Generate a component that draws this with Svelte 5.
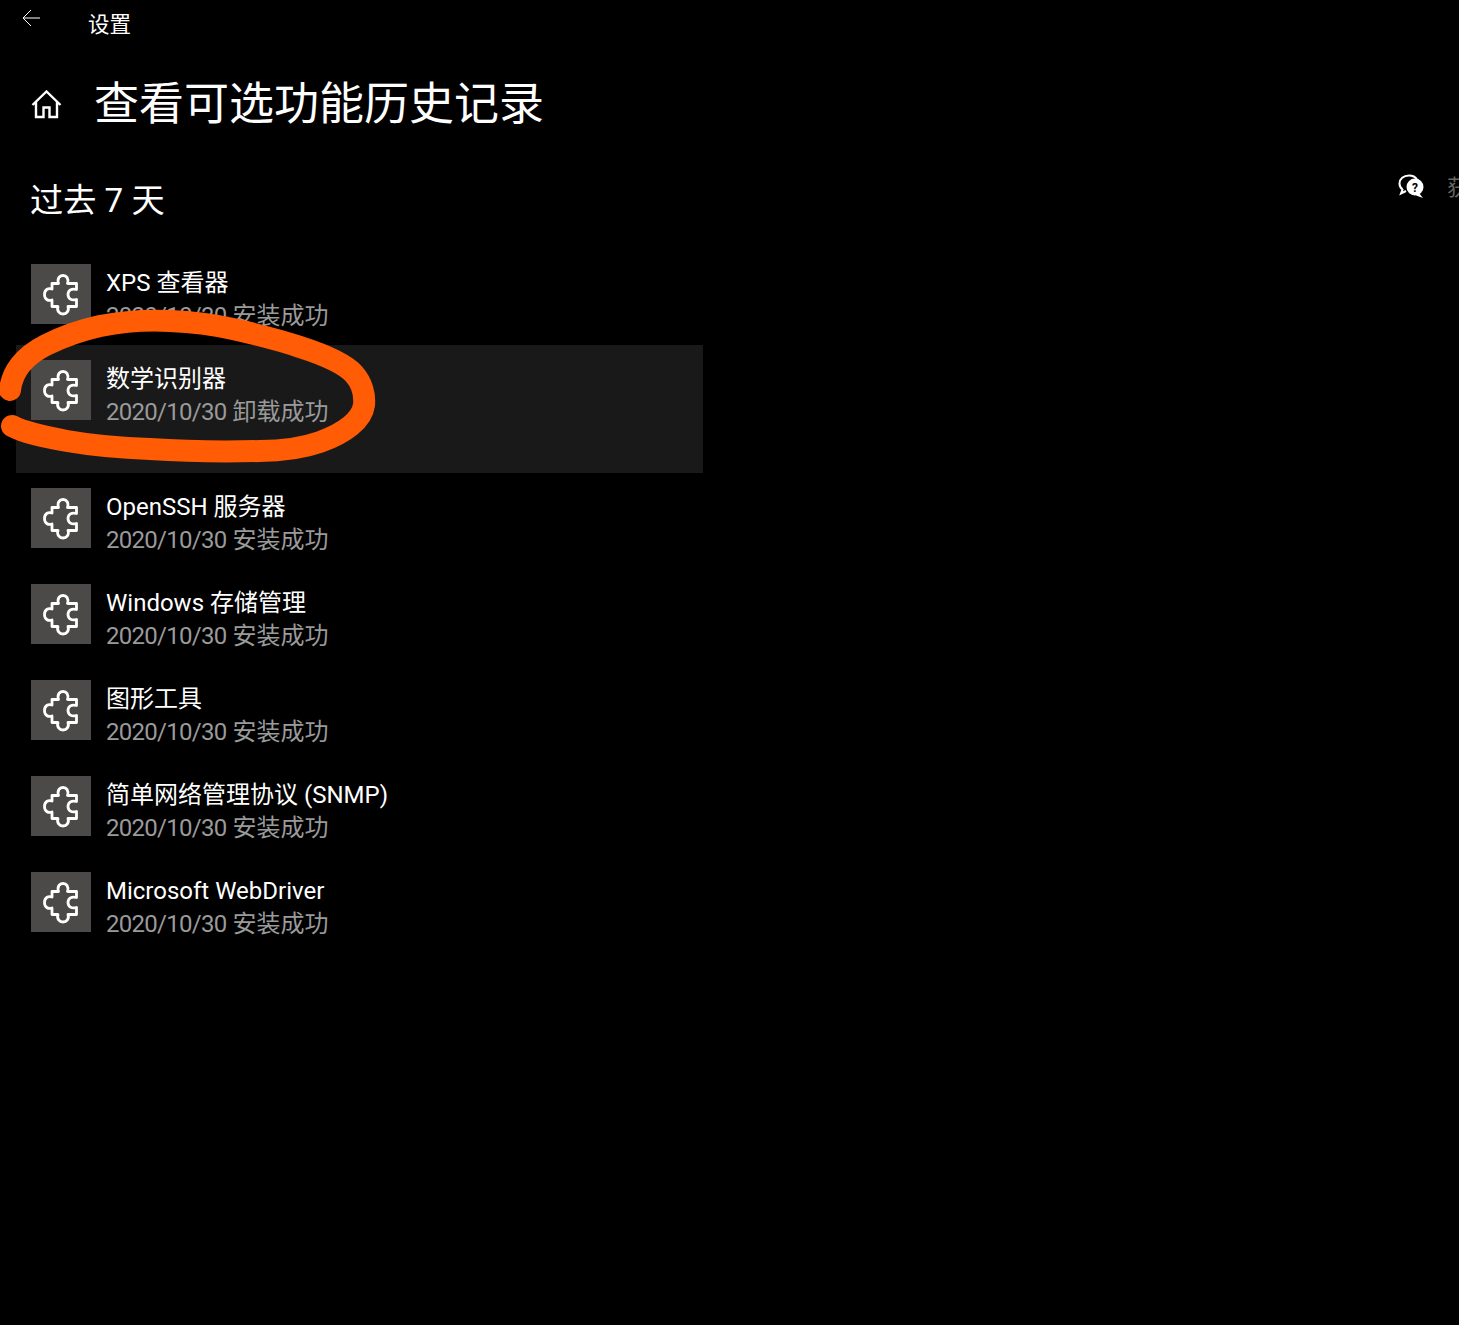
<script>
  const rows = [
    { name: 'XPS 查看器', result: '安装成功' },
    { name: '数学识别器', result: '卸载成功', selected: true },
    { name: 'OpenSSH 服务器', result: '安装成功' },
    { name: 'Windows 存储管理', result: '安装成功' },
    { name: '图形工具', result: '安装成功' },
    { name: '简单网络管理协议 (SNMP)', result: '安装成功' },
    { name: 'Microsoft WebDriver', result: '安装成功' }
  ];
</script>

<div class="page">
  <header class="bar">
    <svg class="back" width="20" height="20" viewBox="0 0 20 20" aria-hidden="true">
      <path d="M19 9H2M10 1L2 9l8 8" fill="none" stroke="#fff" stroke-width="1" />
    </svg>
    <span class="bar-title">设置</span>
  </header>

  <div class="title-row">
    <svg class="home" width="31" height="29" viewBox="0 0 31 29" aria-hidden="true">
      <path d="M1.500 15L15.500 1.500l14 13.500M5 12V27h7.500V17.500h6V27H26V12" fill="none" stroke="#fff" stroke-width="2.400" />
    </svg>
    <h1>查看可选功能历史记录</h1>
  </div>

  <div class="content">
    <main class="col">
      <h2>过去 7 天</h2>
      <ul>
        {#each rows as r}
          <li class:selected={r.selected}>
            <div class="tile">
              <svg width="60" height="60" viewBox="0 0 60 60" aria-hidden="true">
                <path d="M21 19.500H27.500C26 14.500 28.500 11.500 32 11.500C35.500 11.500 38 14.500 36.500 19.500H45.500V25.500C40.500 24 37 26.500 37 30.500C37 34.500 40.500 37 45.500 35.500V42.500H37C38.500 47 35.500 50 32 50C28.500 50 25.500 47 27 42.500H21V36C17 37.500 13.500 35 13.500 30.500C13.500 26 17 23.500 21 25Z" fill="none" stroke="#fff" stroke-width="2.800" stroke-linejoin="round" />
              </svg>
            </div>
            <div class="txt">
              <div class="name">{r.name}</div>
              <div class="status"><span class="date">2020/10/30</span>{r.result}</div>
            </div>
          </li>
        {/each}
      </ul>
    </main>
    <aside class="help">
      <svg width="26" height="26" viewBox="0 0 26 26" aria-hidden="true">
        <path d="M11 1.500C5.500 1.500 1.500 5 1.500 9.500c0 2.500 1 4.500 3 6l-1.500 4 5-2.500" fill="none" stroke="#fff" stroke-width="2" />
        <path d="M11 1.500c3.500 0 6.500 1.500 8 4" fill="none" stroke="#fff" stroke-width="2" />
        <circle cx="17" cy="13" r="8.500" fill="#fff" />
        <path d="M21 19l4 5-7-2.500z" fill="#fff" />
        <text x="17" y="17.500" class="q">?</text>
      </svg>
      <span class="help-text">获取帮助</span>
    </aside>
  </div>

  <svg class="scribble" width="400" height="180" viewBox="0 300 400 180" aria-hidden="true">
    <path d="M10 390C12 372 24 356 46 345C62 337 82 330 100 326C125 321 150 320 170 321C195 322 215 325 233 329C255 334 280 340 300 347C325 355 345 364 354 374C362 383 365 395 364 405C362 420 345 433 320 442C300 449 280 451 260 451C220 452 180 451 150 449C120 448 90 445 67 441C45 437 25 433 12 426" fill="none" stroke="#ff5c05" stroke-width="22" stroke-linecap="round" stroke-linejoin="round" />
  </svg>
</div>

<style>
  :global(body) {
    margin: 0;
    background: #000;
  }
  .page {
    position: relative;
    width: 1459px;
    height: 1325px;
    overflow: hidden;
    background: #000;
    color: #fff;
    font-family: Roboto, "Noto Sans CJK SC", sans-serif;
  }
  .bar {
    display: flex;
    height: 48px;
    padding-left: 21px;
    box-sizing: border-box;
  }
  .back {
    margin-top: 9px;
  }
  .bar-title {
    margin-left: 47px;
    margin-top: 9px;
    font-size: 21.500px;
    line-height: 32px;
  }
  .title-row {
    display: flex;
    align-items: center;
    height: 110px;
    padding-left: 31px;
  }
  .home {
    flex: none;
    margin-top: 2px;
  }
  h1 {
    margin: 0 0 0 32px;
    padding-top: 4px;
    font-size: 45px;
    font-weight: 400;
    line-height: 60px;
  }
  .content {
    display: flex;
  }
  .col {
    width: 703px;
    flex: none;
    padding-left: 16px;
    box-sizing: border-box;
  }
  h2 {
    margin: 21px 0 0 14px;
    height: 70px;
    font-size: 33.200px;
    font-weight: 400;
    line-height: 44px;
  }
  ul {
    list-style: none;
    margin: 0;
    padding: 0;
  }
  li {
    display: flex;
    height: 96px;
    padding: 15px 15px 0;
    box-sizing: border-box;
  }
  li.selected {
    height: 128px;
    background: #191919;
  }
  .tile {
    width: 60px;
    height: 60px;
    flex: none;
    background: #4c4a48;
  }
  .tile svg {
    display: block;
  }
  .txt {
    margin-left: 15px;
    margin-top: 3px;
    font-size: 24px;
    line-height: 33px;
    white-space: nowrap;
  }
  .status {
    color: #9a9a9a;
  }
  .date {
    letter-spacing: -0.730px;
    margin-right: 6px;
  }
  .help {
    display: flex;
    align-items: flex-start;
    margin-left: 695px;
    margin-top: 16px;
    white-space: nowrap;
  }
  .q {
    font-size: 12px;
    font-weight: 700;
    text-anchor: middle;
    fill: #000;
  }
  .help-text {
    margin-left: 23px;
    font-size: 22px;
    line-height: 28px;
    color: #666;
  }
  .scribble {
    position: absolute;
    left: 0;
    top: 300px;
  }
</style>
